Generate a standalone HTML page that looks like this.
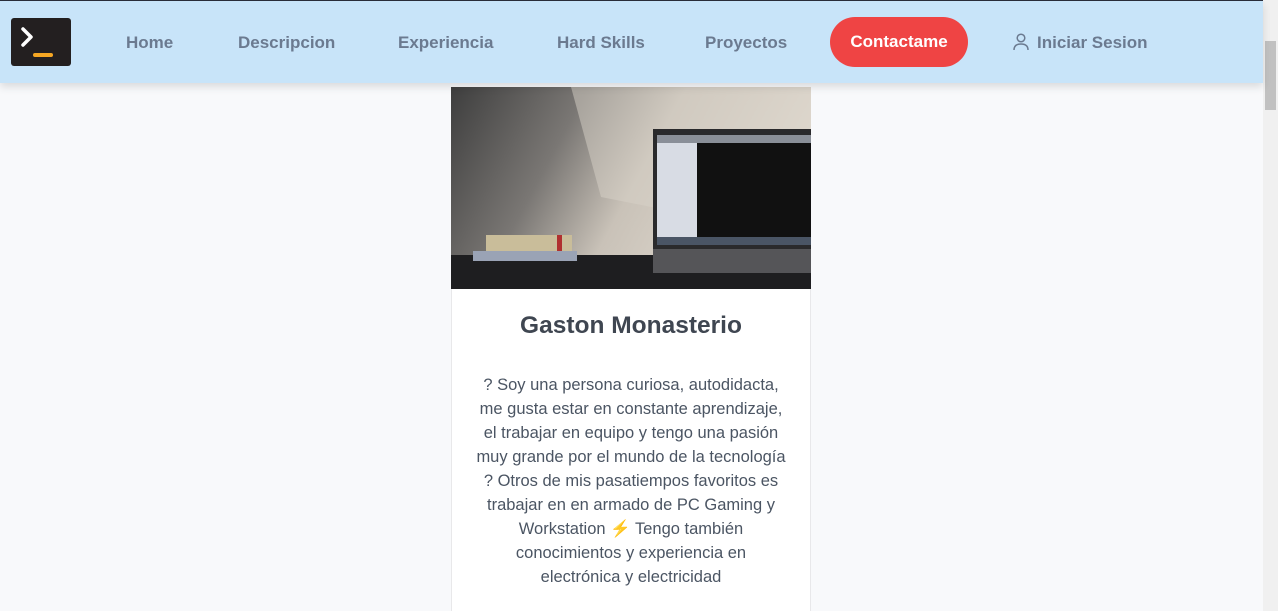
<!DOCTYPE html>
<html><head><style>
*{margin:0;padding:0;box-sizing:border-box}
body{width:1278px;height:611px;overflow:hidden;background:#f8f9fb;font-family:"Liberation Sans",sans-serif;position:relative}
.top{position:absolute;left:0;top:0;width:1278px;height:1px;background:#2a2d3a}
nav{position:absolute;left:0;top:1px;width:1263px;height:82px;background:#c8e4f9;box-shadow:0 4px 8px rgba(0,0,0,.12);z-index:2}
.logo{position:absolute;left:11px;top:17px;width:60px;height:48px;background:#231f20;border-radius:3px}
.n{position:absolute;top:32px;font-size:17px;font-weight:bold;color:#6b7a90}
.btn{position:absolute;left:830px;top:16px;width:138px;height:50px;border-radius:25px;background:#ef4444;color:#fff;font-weight:bold;font-size:17px;text-align:center;line-height:50px}
.sb{position:absolute;left:1263px;top:0;width:15px;height:611px;background:#f0f0f0}
.th{position:absolute;left:1265px;top:41px;width:11px;height:69px;background:#c1c1c1}
.card{position:absolute;left:451px;top:87px;width:360px;height:524px;background:#fff;border:1px solid #e8e8ea;border-bottom:none}
h1{position:absolute;left:451px;width:360px;top:312px;text-align:center;font-size:24.5px;color:#3f4651}
p{position:absolute;left:441px;width:380px;top:373px;text-align:center;font-size:16.5px;line-height:24px;color:#4b5563;white-space:nowrap}
</style></head><body>
<div class="top"></div>
<nav>
<div class="logo"><svg width="60" height="48"><path d="M12 11 L20 19 L12 27" stroke="#fff" stroke-width="3.5" fill="none" stroke-linecap="round" stroke-linejoin="round"/><rect x="22" y="35" width="20" height="4" rx="2" fill="#f5a623"/></svg></div>
<span class="n" style="left:126px">Home</span>
<span class="n" style="left:238px">Descripcion</span>
<span class="n" style="left:398px">Experiencia</span>
<span class="n" style="left:557px">Hard Skills</span>
<span class="n" style="left:705px">Proyectos</span>
<div class="btn">Contactame</div>
<svg style="position:absolute;left:1012px;top:32px" width="18" height="18"><circle cx="9" cy="5" r="3.8" stroke="#6b7a90" stroke-width="1.5" fill="none"/><path d="M2 17 Q2 11 9 11 Q16 11 16 17" stroke="#6b7a90" stroke-width="1.5" fill="none"/></svg>
<span class="n" style="left:1037px">Iniciar Sesion</span>
</nav>
<div class="card"></div>
<svg style="position:absolute;left:451px;top:87px" width="360" height="202">
<defs><linearGradient id="w" x1="0" x2="1" y1="0" y2="0.3"><stop offset="0" stop-color="#3e3e3e"/><stop offset=".35" stop-color="#7a7774"/><stop offset=".6" stop-color="#c9c2b8"/><stop offset="1" stop-color="#e3dcd2"/></linearGradient></defs>
<rect width="360" height="202" fill="url(#w)"/>
<polygon points="120,0 360,0 360,40 260,130 200,120 150,110" fill="#d8d1c7" opacity=".5"/>
<rect y="168" width="360" height="34" fill="#1e1e20"/>
<rect x="202" y="42" width="158" height="120" fill="#2a2a2c"/>
<rect x="206" y="48" width="154" height="106" fill="#111"/>
<rect x="206" y="48" width="40" height="106" fill="#d8dce4"/>
<rect x="206" y="48" width="154" height="8" fill="#8a8f98"/>
<rect x="206" y="150" width="154" height="8" fill="#4a5565"/>
<rect x="202" y="162" width="158" height="24" fill="#555558"/>
<rect x="35" y="148" width="86" height="16" fill="#c9bd9a"/>
<rect x="106" y="148" width="5" height="16" fill="#b03030"/>
<rect x="22" y="164" width="104" height="10" fill="#9aa3b5"/>
</svg>
<h1>Gaston Monasterio</h1>
<p>? Soy una persona curiosa, autodidacta,<br>me gusta estar en constante aprendizaje,<br>el trabajar en equipo y tengo una pasión<br>muy grande por el mundo de la tecnología<br>? Otros de mis pasatiempos favoritos es<br>trabajar en en armado de PC Gaming y<br>Workstation <span style="color:#f5b800">⚡</span> Tengo también<br>conocimientos y experiencia en<br>electrónica y electricidad</p>
<div class="sb"></div><div class="th"></div>
</body></html>
